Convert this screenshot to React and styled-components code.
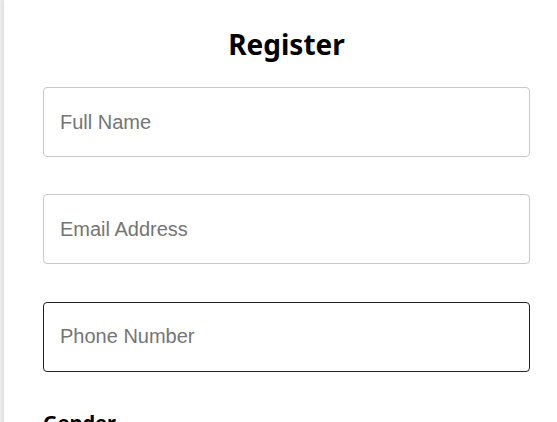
import React from "react";
import styled, { createGlobalStyle } from "styled-components";

const Global = createGlobalStyle`
  html, body { margin: 0; padding: 0; }
  body {
    background: #ececec;
    font-family: "Liberation Sans", Arial, sans-serif;
    overflow: hidden;
  }
`;

const Page = styled.div`
  padding-left: 4px;
  min-height: 422px;
`;

const Card = styled.div`
  background: #fff;
  min-height: 422px;
  box-shadow: -1px 0 3px rgba(0, 0, 0, 0.08);
  padding: 24px 27px 0 39px;
  box-sizing: border-box;
`;

const Title = styled.h2`
  margin: 0 0 23px;
  text-align: center;
  font-family: "Noto Sans", "Open Sans", sans-serif;
  font-weight: 700;
  font-size: 28px;
  line-height: 40px;
  color: #000;
`;

const Form = styled.form`
  display: flex;
  flex-direction: column;
  gap: 37.4px;
  width: 487px;
`;

const Input = styled.input`
  box-sizing: border-box;
  width: 100%;
  height: 70px;
  padding: 0 16px;
  border: 1px solid ${(p) => (p.$active ? "#222" : "#c8c8c8")};
  border-radius: 4px;
  font-family: "Liberation Sans", Arial, sans-serif;
  font-size: 20px;
  color: #222;
  outline: none;
  background: #fff;
  &::placeholder { color: #757575; }
`;

const Label = styled.div`
  font-family: "Noto Sans", sans-serif;
  font-weight: 700;
  font-size: 20px;
  color: #000;
`;

export default function App() {
  return (
    <>
      <Global />
      <Page>
        <Card>
          <Title>Register</Title>
          <Form onSubmit={(e) => e.preventDefault()}>
            <Input placeholder="Full Name" />
            <Input placeholder="Email Address" />
            <Input placeholder="Phone Number" $active />
            <Label>Gender</Label>
          </Form>
        </Card>
      </Page>
    </>
  );
}
